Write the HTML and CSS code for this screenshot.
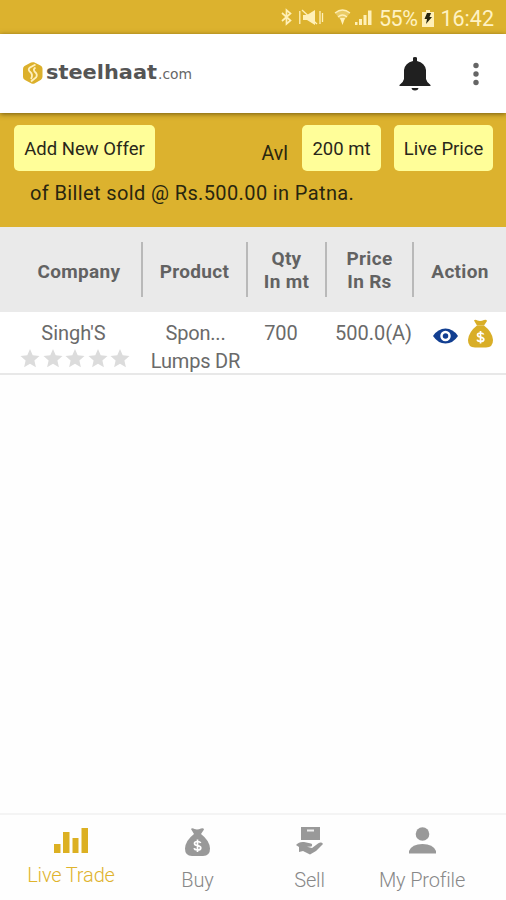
FILE: index.html
```html
<!DOCTYPE html>
<html lang="en">
<head>
<meta charset="utf-8">
<title>Steelhaat</title>
<link rel="stylesheet" href="styles.css">
</head>
<body>
<svg class="defs" width="0" height="0">
  <symbol id="bag" viewBox="0 0 25 29">
    <path d="M6 1.500Q7 .2 9.500 1.500Q12.500 2.500 16 1Q18.500 0 19 2L16 6.500H9Z"/>
    <path d="M9 6.500H16Q24.500 13 25 21Q25 28.500 18 28.500H7Q0 28.500 0 21Q.5 13 9 6.500Z"/>
    <path class="dollar" d="M15.700 15.500Q15 14 12.500 14Q9.500 14 9.500 16Q9.500 17.700 12.500 18.200Q15.800 18.800 15.800 20.500Q15.800 22.500 12.500 22.500Q9.500 22.500 9.200 20.700M12.500 12V24.500"/>
  </symbol>
  <symbol id="star" viewBox="0 0 20 19"><path d="M10 0L12.700 6.300L19.500 7L14.400 11.500L15.900 18.200L10 14.700L4.100 18.200L5.600 11.500L.5 7L7.300 6.300Z"/></symbol>
</svg>
<div class="status">
  <svg class="status-icons" viewBox="0 0 94 20" width="94" height="20">
    <path class="line" d="M3 6L11.500 13.500L7.500 17V3L11.500 6.500L3 14"/>
    <path class="fill" d="M24 8H28L36 3V18L28 13H24Z"/>
    <path class="line thin" d="M23 3L38 17M20.800 4V17M41 4V17M43.500 6V15"/>
    <path class="fill faint" d="M56 6Q63.500 0 71 6L63.500 15Z"/>
    <path class="line thin" d="M56 6Q63.500 0 71 6M59 10Q63.500 6 68 10"/>
    <path class="fill" d="M61 11H66L63.500 18ZM76 15H78.500V18H76ZM80 12H83V18H80ZM84.500 8H87.500V18H84.500ZM89 3.500H92.500V18H89Z"/>
  </svg>
  <span class="percent">55%</span>
  <svg class="battery" viewBox="0 0 12 17" width="12" height="17"><path class="fill" d="M4 0H8V2H12V17H0V2H4Z"/><path class="bolt" d="M5 3H9L7.500 7H10L4 14L5 9H2.500Z"/></svg>
  <span class="clock">16:42</span>
</div>
<header class="appbar">
  <svg class="logo" viewBox="0 0 174 28" width="174" height="28">
    <path class="hex" d="M9 3.500Q10.500 3 12 3.300L18.500 6.500Q20.500 7.500 20.500 9.500V17.500Q20.500 19.500 19 20.800L12.500 24.500Q11 25.200 9.500 24.500L3 21Q1 20 1 18V10Q1 8 2.500 7Z"/>
    <path class="swirl" d="M13.500 5.500L8 8.500Q5.500 10.500 8 12.800Q11.500 15.500 9 20M13.500 8.500Q10.500 10.500 13 13Q16 15.500 14 18.500L9 22.500"/>
    <text class="brand" x="24" y="20" textLength="111" lengthAdjust="spacingAndGlyphs">steelhaat</text>
    <text class="dotcom" x="136" y="20" textLength="34" lengthAdjust="spacingAndGlyphs">.com</text>
  </svg>
  <svg class="bell" viewBox="0 0 32 36" width="32" height="36"><path d="M14 5V2Q14 1 16 1Q18 1 18 2V5Q26 7 27 14V23Q27.500 26 31.500 29V30H.5V29Q4.500 26 5 23V14Q6 7 14 5ZM12.500 32H19.500Q19 34.500 16 34.500Q13 34.500 12.500 32Z"/></svg>
  <svg class="dots" viewBox="0 0 8 24" width="8" height="24"><circle cx="4" cy="3.500" r="2.700"/><circle cx="4" cy="12" r="2.700"/><circle cx="4" cy="20.500" r="2.700"/></svg>
</header>
<section class="offers">
  <div class="buttons">
    <button class="add">Add New Offer</button>
    <span class="avl">Avl</span>
    <button class="qty">200 mt</button>
    <button class="live">Live Price</button>
  </div>
  <p class="ticker">of Billet sold @ Rs.500.00 in Patna.</p>
</section>
<main>
  <div class="grid head">
    <div class="company">Company</div><div>Product</div><div class="two">Qty<br>In mt</div><div class="two">Price<br>In Rs</div><div class="action">Action</div>
  </div>
  <div class="grid row">
    <div class="seller">Singh'S
      <div class="stars"><svg><use href="#star"/></svg><svg><use href="#star"/></svg><svg><use href="#star"/></svg><svg><use href="#star"/></svg><svg><use href="#star"/></svg></div>
    </div>
    <div class="product">Spon...<br>Lumps DR</div>
    <div class="amount">700</div>
    <div class="cost">500.0(A)</div>
    <div class="actions">
      <svg class="eye" viewBox="0 0 25 16" width="25" height="16"><path d="M0 8Q5 .5 12.500 .5Q20 .5 25 8Q20 15.500 12.500 15.500Q5 15.500 0 8Z"/><circle class="ring" cx="12.500" cy="8" r="4"/></svg>
      <svg class="bag gold" width="25" height="29"><use href="#bag"/></svg>
    </div>
  </div>
</main>
<nav class="tabs">
  <div class="tab active"><svg width="34" height="25" viewBox="0 0 34 25"><path d="M0 16H6.500V25H0ZM9 4H15.500V25H9ZM18.500 10H24.500V25H18.500ZM27.500 0H34V25H27.500Z"/></svg><span>Live Trade</span></div>
  <div class="tab buy"><svg class="bag" width="25" height="30"><use href="#bag"/></svg><span>Buy</span></div>
  <div class="tab sell"><svg width="27" height="28" viewBox="0 0 27 28"><path d="M5 0H24V13H5Z"/><path class="slot" d="M11 3.500H18"/><path d="M0 18Q3 14.500 8 15L15 16.500Q17 17.500 15.500 19.500L11 19.800L16 21L22 16.500Q25.500 14.500 27 17L20 24L14 27.500L7 24L3 25V20Z"/></svg><span>Sell</span></div>
  <div class="tab profile"><svg width="27" height="27" viewBox="0 0 27 27"><circle cx="13.500" cy="7" r="6.800"/><path d="M0 26.500V24Q3 17 13.500 17Q24 17 27 24V26.500Z"/></svg><span>My Profile</span></div>
</nav>
</body>
</html>
```

FILE: styles.css
```css
* { box-sizing: border-box; }
body { margin: 0; width: 506px; height: 900px; display: flex; flex-direction: column; background: #fefefe; color: #6a6a6a; font-family: Roboto, sans-serif; font-size: 20px; overflow: hidden; }
svg { flex: none; display: block; }
.defs { position: absolute; }
.status { height: 34px; flex: none; background: #dcb22e; color: #fff2c3; display: flex; align-items: center; padding: 2px 13px 0 279px; font-size: 21.500px; white-space: nowrap; }
.status-icons { margin: -2px 6px 0 0; }
.status .fill { fill: #fff0b8; }
.status .faint { opacity: .4; }
.status .line { fill: none; stroke: #fff0b8; stroke-width: 1.700; }
.status .thin { stroke-width: 1.300; }
.battery { margin: 0 6px 0 5px; }
.bolt { fill: #252410; }
.percent { width: 39px; letter-spacing: -.5px; }
.appbar { height: 79px; flex: none; display: flex; align-items: center; padding: 0 26px 0 22px; background: #fff; position: relative; box-shadow: 0 1px 5px #735a10; }
.logo { margin-top: -1px; }
.hex { fill: #dcb02b; }
.swirl { fill: none; stroke: #fff0bd; stroke-width: 1.800; }
.brand { font: bold 20px "DejaVu Sans", sans-serif; fill: #555; }
.dotcom { font: 14px "DejaVu Sans", sans-serif; fill: #666; }
.bell { margin-left: auto; fill: #202020; }
.dots { margin-left: 41px; fill: #656565; }
.offers { height: 114px; flex: none; background: #dcb22e; color: #29260f; padding: 12px 13px 0 14px; }
.buttons { display: flex; height: 46px; }
button { border: 0; padding: 1px 0 0; border-radius: 5px; background: #fffe99; color: #292719; font: 18.500px Roboto, sans-serif; height: 46px; white-space: nowrap; }
.add { width: 141px; }
.avl { margin: 17px 14px 0 auto; font-size: 19.500px; line-height: 24px; }
.qty { width: 79px; margin-right: 13px; }
.live { width: 99px; }
.ticker { margin: 9px 0 0 16px; line-height: 26px; font-size: 20px; letter-spacing: .38px; }
.grid { display: grid; grid-template-columns: 143px 105px 79px 87px 92px; text-align: center; }
.head { height: 85px; background: #eaeaea; font-size: 19px; letter-spacing: .3px; font-weight: 700; line-height: 23px; color: #626262; padding: 15px 0; }
.head > div { display: flex; align-items: center; justify-content: center; border-right: 2px solid #b9b9b9; padding-top: 3px; }
.head > .two { padding-top: 1px; }
.head .company { padding-left: 17px; }
.head .action { border: 0; }
.row { height: 63px; border-bottom: 2px solid #e8e8e8; line-height: 28px; padding-top: 7px; background: #fff; }
.seller { padding-left: 4px; }
.stars { display: flex; gap: 2.500px; margin: 2px 0 0 16px; fill: #dcdcdc; }
.stars svg { width: 20px; height: 19px; }
.product { letter-spacing: -.2px; }
.amount { padding-right: 13px; }
.cost { padding-left: 6px; }
.actions { display: flex; padding-left: 19px; }
.eye { margin: 9px 10px 0 0; fill: #123f91; }
.ring { fill: none; stroke: #fff; stroke-width: 2.500; }
.bag { fill: #999; }
.gold { fill: #d9ae27; }
.dollar { fill: none; stroke: #fff; stroke-width: 1.700; }
.tabs { height: 87px; margin-top: auto; flex: none; border-top: 2px solid #f4f4f4; display: grid; grid-template-columns: 142px 111px 113px 140px; font-weight: 300; color: #888; fill: #999; letter-spacing: -.15px; }
.tab { display: flex; flex-direction: column; align-items: center; padding-top: 12px; line-height: 28px; }
.tab span { margin-top: auto; margin-bottom: 6px; }
.active { color: #dfb32d; fill: #dcb022; padding-top: 13px; }
.active span { margin-bottom: 11px; }
.slot { stroke: #eee; stroke-width: 2; }
.profile { padding-right: 28px; }
```
